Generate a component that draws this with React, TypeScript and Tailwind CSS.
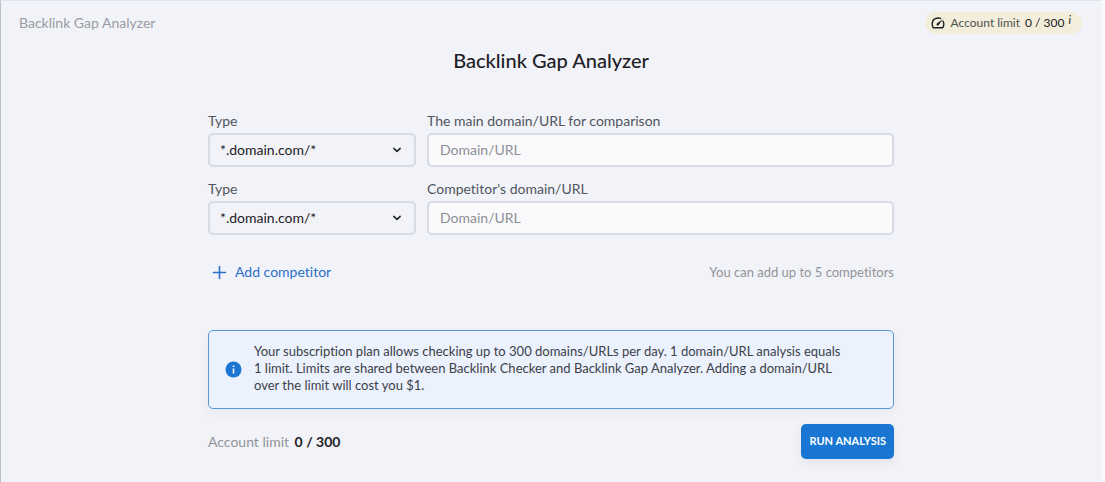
import { useId, useState } from "react";

function GaugeIcon() {
  return (
    <svg width="14" height="14" viewBox="0 0 14 14" fill="none" stroke="currentColor" strokeWidth="1.4" strokeLinecap="round" strokeLinejoin="round" aria-hidden="true">
      <path d="M9.6 2.4C6.4 1.2 1.2 2.6 1.2 8C1.2 9.4 1.6 10.6 2.2 11.7H11.8C12.9 9.8 13.1 7.2 12 5.2" />
      <path d="M5.8 7.6L11.6 3.2L7.6 9.2A1.2 1.2 0 1 1 5.8 7.6Z" fill="currentColor" stroke="none" />
    </svg>
  );
}

function DomainRow({ label }: { label: string }) {
  const id = useId();
  return (
    <div className="grid grid-cols-[208px_1fr] gap-x-[11px]">
      <div className="flex flex-col gap-0.5">
        <label htmlFor={`${id}-type`} className="text-sm leading-5 text-[#50555e]">
          Type
        </label>
        <div className="grid items-center">
          <select
            id={`${id}-type`}
            className="col-start-1 row-start-1 h-[34px] w-full appearance-none rounded-[5px] border-2 border-[#d8dae5] bg-[#f2f3f8] px-2.5 text-sm text-[#1d2026]"
          >
            <option>*.domain.com/*</option>
            <option>domain.com/*</option>
          </select>
          <svg className="pointer-events-none col-start-1 row-start-1 mr-3.5 justify-self-end" width="10" height="10" viewBox="0 0 10 10" fill="none" stroke="#1d2026" strokeWidth="1.5" strokeLinecap="round" strokeLinejoin="round" aria-hidden="true">
            <path d="M1.8 3.4L5 6.4L8.2 3.4" />
          </svg>
        </div>
      </div>
      <div className="flex flex-col gap-0.5">
        <label htmlFor={`${id}-url`} className="text-sm leading-5 text-[#50555e]">
          {label}
        </label>
        <input
          id={`${id}-url`}
          type="text"
          placeholder="Domain/URL"
          className="h-[34px] w-full rounded-[5px] border-2 border-[#d8dae5] bg-[#fafafd] px-[11px] pb-0.5 text-sm text-[#1d2026] placeholder:text-[#8c8e93]"
        />
      </div>
    </div>
  );
}

export default function App() {
  const [competitors, setCompetitors] = useState(1);
  return (
    <div className="flex min-h-screen bg-[#f7f8fc] pr-1 font-['Lato','Noto_Sans',sans-serif] [font-variant-ligatures:none]">
      <div className="flex-1 border-t border-l border-t-[#e0e2ee] border-l-[#bfc1c9] bg-[#f2f3f8] pb-5">
        <header className="flex items-center justify-between pt-[11px] pr-[19px] pl-[18px]">
          <span className="text-sm leading-5 text-[#999ca3]">Backlink Gap Analyzer</span>
          <div className="flex h-[22px] items-center rounded-full bg-[#f3eddb] pr-[11px] pl-1.5 text-xs text-[#1d2026]">
            <GaugeIcon />
            <span className="ml-1.5 text-[#50524f]">Account limit</span>
            <span className="ml-[5px]">0 / 300</span>
            <i className="mb-2 ml-1 text-[11px] leading-none">i</i>
          </div>
        </header>
        <main className="mx-auto w-full max-w-[686px]">
          <h1 className="mt-3 text-center text-xl leading-7 font-medium text-[#1d2026]">Backlink Gap Analyzer</h1>
          <form className="mt-[37px]" onSubmit={(e) => e.preventDefault()}>
            <div className="flex flex-col gap-3">
              <DomainRow label="The main domain/URL for comparison" />
              {Array.from({ length: competitors }, (_, i) => (
                <DomainRow key={i} label="Competitor's domain/URL" />
              ))}
            </div>
            <div className="mt-[27px] flex items-center justify-between leading-5">
              <button type="button" onClick={() => setCompetitors((n) => Math.min(5, n + 1))} className="flex items-center gap-2 pl-1 text-sm leading-5 text-[#2b70c9]">
                <svg width="15" height="15" viewBox="0 0 15 15" fill="none" stroke="currentColor" strokeWidth="1.6" strokeLinecap="round" aria-hidden="true">
                  <path d="M7.5 1.5V13.5M1.5 7.5H13.5" />
                </svg>
                Add competitor
              </button>
              <span className="text-[13px] text-[#919399]">You can add up to 5 competitors</span>
            </div>
            <div className="mt-12 flex items-center gap-3 rounded-[5px] border border-[#5a97d8] bg-[#ebf2fe] py-3 pr-2 pl-4 shadow-[0_4px_8px_rgba(60,70,100,0.06)]">
              <svg className="shrink-0" width="17" height="17" viewBox="0 0 17 17" aria-hidden="true">
                <circle cx="8.5" cy="8.5" r="8" fill="#1c77d4" />
                <path d="M8.5 4.4V5.9M8.5 7.6V12.4" stroke="#fff" strokeWidth="1.6" />
              </svg>
              <p className="pb-0.5 text-[13px] leading-[17px] text-[#3c4047]">
                Your subscription plan allows checking up to 300 domains/URLs per day. 1 domain/URL analysis equals
                <br />
                1 limit. Limits are shared between Backlink Checker and Backlink Gap Analyzer. Adding a domain/URL
                <br />
                over the limit will cost you $1.
              </p>
            </div>
            <div className="mt-[15px] flex items-center justify-between">
              <span className="text-sm text-[#919399]">
                Account limit <strong className="ml-0.5 font-bold text-[#1d2026]">0 / 300</strong>
              </span>
              <button type="submit" className="h-[35px] rounded-[5px] bg-[#1976d2] px-2 text-[11px] font-bold text-white shadow-[0_4px_8px_rgba(60,70,100,0.08)]">
                RUN ANALYSIS
              </button>
            </div>
          </form>
        </main>
      </div>
    </div>
  );
}
